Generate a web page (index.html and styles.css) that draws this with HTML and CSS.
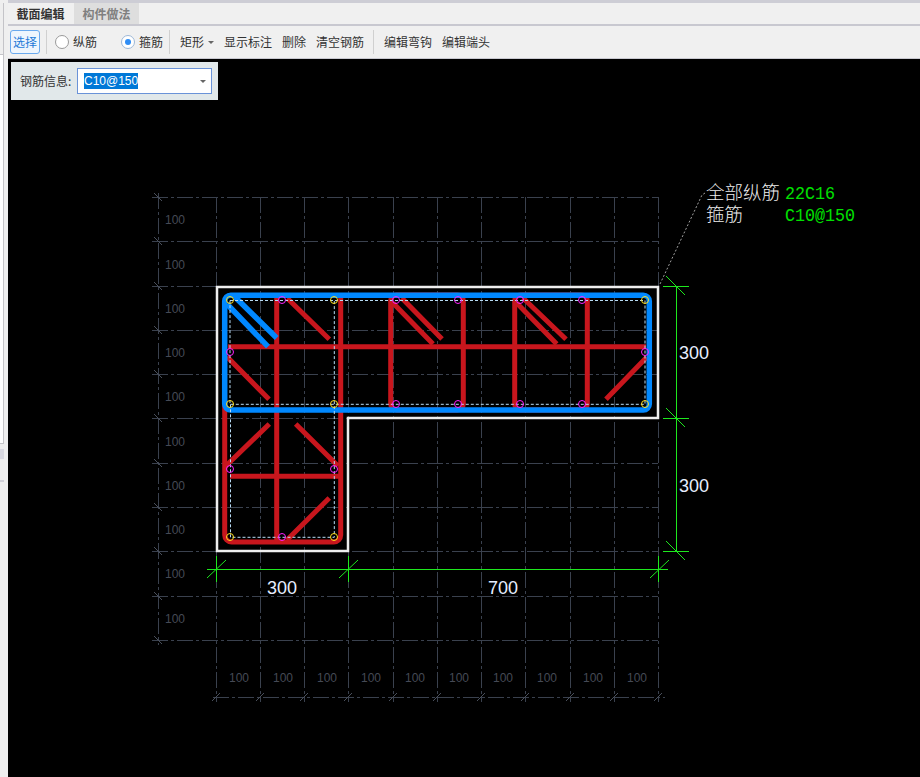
FILE: index.html
```html
<!DOCTYPE html>
<html lang="zh-CN">
<head>
<meta charset="utf-8">
<title>截面编辑</title>
<link rel="stylesheet" href="styles.css">
</head>
<body>
<div class="app">
  <aside class="side">
    <div class="side-panels">
      <div class="sp sp-a"></div>
      <div class="sp sp-b"></div>
      <div class="sp sp-c"></div>
      <div class="sp sp-d"></div>
      <div class="sp sp-e"></div>
      <div class="sp sp-f"></div>
    </div>
  </aside>
  <main class="main">
    <div class="tabs">
      <div class="tab tab-active">截面编辑</div>
      <div class="tab">构件做法</div>
    </div>
    <div class="toolbar">
      <button class="btn-select">选择</button>
      <span class="sep sep-a"></span>
      <label class="radio radio-a"><span class="dot"></span>纵筋</label>
      <label class="radio radio-b"><span class="dot dot-on"></span>箍筋</label>
      <span class="sep sep-b"></span>
      <span class="tool tool-menu">矩形<span class="caret"></span></span>
      <span class="tool">显示标注</span>
      <span class="tool">删除</span>
      <span class="tool">清空钢筋</span>
      <span class="sep sep-c"></span>
      <span class="tool">编辑弯钩</span>
      <span class="tool">编辑端头</span>
    </div>
    <div class="canvas">
      <div class="info">
        <span class="info-label">钢筋信息:</span>
        <div class="combo"><span class="combo-sel">C10@150</span><span class="caret combo-caret"></span></div>
      </div>
      <svg class="drawing" width="912" height="718" viewBox="8 59 912 718">
        <g class="grid">
          <path d="M152 197H658M152 241H658M152 286H658M152 330H658M152 374H658M152 418H658M152 463H658M152 507H658M152 551H658M152 596H658M152 640H658"/>
          <path d="M216 197V702M260 197V702M304 197V702M348 197V702M393 197V702M437 197V702M481 197V702M525 197V702M570 197V702M614 197V702M658 197V702"/>
          <path d="M158 193V645"/>
          <path d="M213 697H665"/>
        </g>
        <path class="grid-tick" d="M154 193l8 8M154 237l8 8M154 282l8 8M154 326l8 8M154 370l8 8M154 414l8 8M154 459l8 8M154 503l8 8M154 547l8 8M154 592l8 8M154 636l8 8"/>
        <path class="grid-tick" d="M212 701l8-8M256 701l8-8M300 701l8-8M344 701l8-8M389 701l8-8M433 701l8-8M477 701l8-8M521 701l8-8M566 701l8-8M610 701l8-8M654 701l8-8"/>
        <g class="grid-text">
          <text x="165" y="224">100</text><text x="165" y="269">100</text><text x="165" y="313">100</text><text x="165" y="357">100</text><text x="165" y="401">100</text><text x="165" y="446">100</text><text x="165" y="490">100</text><text x="165" y="534">100</text><text x="165" y="578">100</text><text x="165" y="623">100</text>
          <text x="229" y="682">100</text><text x="273" y="682">100</text><text x="317" y="682">100</text><text x="361" y="682">100</text><text x="405" y="682">100</text><text x="449" y="682">100</text><text x="493" y="682">100</text><text x="537" y="682">100</text><text x="583" y="682">100</text><text x="627" y="682">100</text>
        </g>

        <path class="outline" d="M217 287H658V418H348V551H217Z"/>

        <g class="red">
          <path d="M224.7 400V535a7 7 0 0 0 7 7H333.7a7 7 0 0 0 7-7V295"/>
          <rect x="390.7" y="295" width="72.6" height="115" rx="6"/>
          <rect x="514.7" y="295" width="72.6" height="115" rx="6"/>
          <path d="M276.7 293V542M228 346.7H646M230 476.3H340"/>
          <path d="M287.3 298.3L329.3 339.3M227 356.7L269 399.3M393 303L433 344M401.7 298L442 339M516.7 303L556.7 344M523 298L566 339.3M646.7 357.3L606 399.3M269.3 424L225 466.7M295.7 424L338 466M329.3 498L287 540"/>
        </g>
        <g class="blue">
          <rect x="224.7" y="295.3" width="424.6" height="114.7" rx="6"/>
          <path d="M235 297L276.7 338M227 304L268 346.7"/>
        </g>
        <g class="rebar-dash">
          <path d="M230 300.5H645V404.3H230ZM230.5 404.3V537.3H334.3V300.5"/>
        </g>
        <g class="ring-y">
          <circle cx="230" cy="300" r="3.5"/><circle cx="334" cy="300" r="3.5"/><circle cx="645" cy="300" r="3.5"/><circle cx="230" cy="404" r="3.5"/><circle cx="334" cy="404" r="3.5"/><circle cx="645" cy="404" r="3.5"/><circle cx="230" cy="537" r="3.5"/><circle cx="334" cy="537" r="3.5"/>
        </g>
        <g class="ring-m">
          <circle cx="282" cy="300" r="3.5"/><circle cx="396" cy="300" r="3.5"/><circle cx="458" cy="300" r="3.5"/><circle cx="520" cy="300" r="3.5"/><circle cx="582" cy="300" r="3.5"/>
          <circle cx="230" cy="352" r="3.5"/><circle cx="645" cy="352" r="3.5"/>
          <circle cx="396" cy="404" r="3.5"/><circle cx="458" cy="404" r="3.5"/><circle cx="520" cy="404" r="3.5"/><circle cx="582" cy="404" r="3.5"/>
          <circle cx="230" cy="469" r="3.5"/><circle cx="334" cy="469" r="3.5"/><circle cx="282" cy="537" r="3.5"/>
        </g>

        <g class="dim">
          <path d="M676.5 286V551M663 286H689M663 418H689M663 551H689"/>
          <path d="M207 569.5H668M216.5 556V582M348.5 556V582M658.5 556V582"/>
        </g>
        <path class="dim-tick" d="M666 276L685 295M666 408L685 427M666 541L685 560M207 578L226 560M339 578L358 560M650 578L669 560"/>
        <path class="leader" d="M660 284L702 195L705 193"/>

        <g class="dim-text">
          <text x="679" y="359">300</text>
          <text x="679" y="492">300</text>
          <text x="267" y="594">300</text>
          <text x="488" y="594">700</text>
        </g>
        <g class="note">
          <text x="706" y="199">全部纵筋</text>
          <text x="706" y="221">箍筋</text>
        </g>
        <g class="note-val">
          <text x="785" y="199" textLength="50" lengthAdjust="spacingAndGlyphs">22C16</text>
          <text x="785" y="221" textLength="70" lengthAdjust="spacingAndGlyphs">C10@150</text>
        </g>
      </svg>
    </div>
  </main>
</div>
</body>
</html>
```
FILE: styles.css
```css
* { box-sizing: border-box; }
html, body { margin: 0; padding: 0; height: 777px; overflow: hidden; background: #f0f0f0; }
body { font-family: "Noto Sans CJK SC", "Liberation Sans", sans-serif; font-size: 12px; color: #333; }

.app { display: flex; width: 920px; height: 777px; }

.side { width: 8px; flex: none; padding-top: 3px; background: #efefef; }
.side-panels { width: 4px; display: flex; flex-direction: column; }
.sp { border-right: 1px solid #c4c4c8; }
.sp-a { height: 52px; background: #eeeeee; border-bottom: 1px solid #c4c4c8; }
.sp-b { height: 389px; background: #ffffff; border-bottom: 1px solid #c4c4c8; }
.sp-c { height: 5px; background: #eeeeee; border-right: none; }
.sp-d { height: 10px; background: #d8d8e0; border-right: none; }
.sp-e { height: 21px; background: #eeeeee; border-right: none; }
.sp-f { height: 2px; background: #d0d0d8; border-right: none; }

.main { flex: 1; display: flex; flex-direction: column; min-width: 0; }

.tabs { height: 26px; display: flex; flex: none; border-top: 3px solid #cdcdd5; border-bottom: 2px solid #c8c8d0; background: #f0f0f0; }
.tab { width: 65px; margin-right: 1px; display: flex; align-items: center; justify-content: center; font-weight: 700; color: #808080; background: #dedede; line-height: 1; }
.tab-active { color: #333; background: #f0f0f0; }

.toolbar { height: 33px; flex: none; display: flex; align-items: center; padding-left: 2px; background: #f0f0f0; border-bottom: 1px solid #c8c8d0; }

.btn-select { width: 30px; height: 24px; padding: 0; border: 1px solid #6aa9ee; border-radius: 3px; background: #eef5fd; color: #1f7ad8; font: inherit; line-height: 1; }
.sep { width: 1px; height: 24px; background: #d0d0d0; flex: none; }
.sep-a { margin: 0 8px 0 6px; }
.sep-b { margin: 0 10px 0 6px; }
.sep-c { margin: 0 10px 0 -1px; }

.radio { display: flex; align-items: center; line-height: 1; }
.radio-a { margin-right: 24px; }
.dot { width: 14px; height: 14px; margin-right: 4px; border: 1px solid #9a9a9a; border-radius: 50%; background: #fff; position: relative; }
.dot-on { border-color: #9db8d8; }
.dot-on::after { content: ""; position: absolute; left: 3px; top: 3px; width: 6px; height: 6px; border-radius: 50%; background: #2f8df5; }

.tool { margin-right: 10px; line-height: 1; display: flex; align-items: center; }
.caret { width: 0; height: 0; border-left: 3px solid transparent; border-right: 3px solid transparent; border-top: 3px solid #666; margin-left: 4px; }

.canvas { flex: 1; position: relative; background: #000; overflow: hidden; }
.drawing { display: block; }

.info { position: absolute; left: 3px; top: 3px; width: 207px; height: 38px; display: flex; align-items: center; padding-left: 9px; background: #e1e8ea; }
.info-label { width: 57px; line-height: 1; }
.combo { width: 135px; height: 26px; display: flex; align-items: center; padding-left: 6px; background: #fff; border: 1px solid #6a93d8; position: relative; }
.combo-sel { background: #0078d7; color: #fff; font-family: "Liberation Sans", sans-serif; font-size: 12px; line-height: 16px; }
.combo-caret { position: absolute; right: 5px; top: 11px; }

.grid path { fill: none; stroke: #3a414e; stroke-width: 1; stroke-dasharray: 16 3 3 3; shape-rendering: crispEdges; }
.grid-tick { fill: none; stroke: #4a505c; stroke-width: 1; }
.grid-text text { font-family: "Liberation Sans", sans-serif; font-size: 12px; fill: #454a55; }

.outline { fill: none; stroke: #eeeeee; stroke-width: 2.5; }
.red rect, .red path { fill: none; stroke: #c8161d; stroke-width: 5; }
.blue rect, .blue path { fill: none; stroke: #0088ff; stroke-width: 5.5; }
.rebar-dash path { fill: none; stroke: #b8dcf5; stroke-width: 1; stroke-dasharray: 3 2; }
.ring-y circle { fill: none; stroke: #ffe020; stroke-width: 1; }
.ring-m circle { fill: none; stroke: #ff20ff; stroke-width: 1; }

.dim path { fill: none; stroke: #1ee81e; stroke-width: 1; shape-rendering: crispEdges; }
.dim-tick { fill: none; stroke: #1ee81e; stroke-width: 1; }
.leader { fill: none; stroke: #a0a0a0; stroke-width: 1; stroke-dasharray: 2 2; }

.dim-text text { font-family: "Liberation Sans", sans-serif; font-size: 18px; fill: #e6eeff; }
.note text { font-family: "Noto Sans CJK SC", sans-serif; font-size: 18.5px; font-weight: 300; fill: #eeeeee; }
.note-val text { font-family: "Liberation Mono", monospace; font-size: 19px; fill: #00e000; }
```
